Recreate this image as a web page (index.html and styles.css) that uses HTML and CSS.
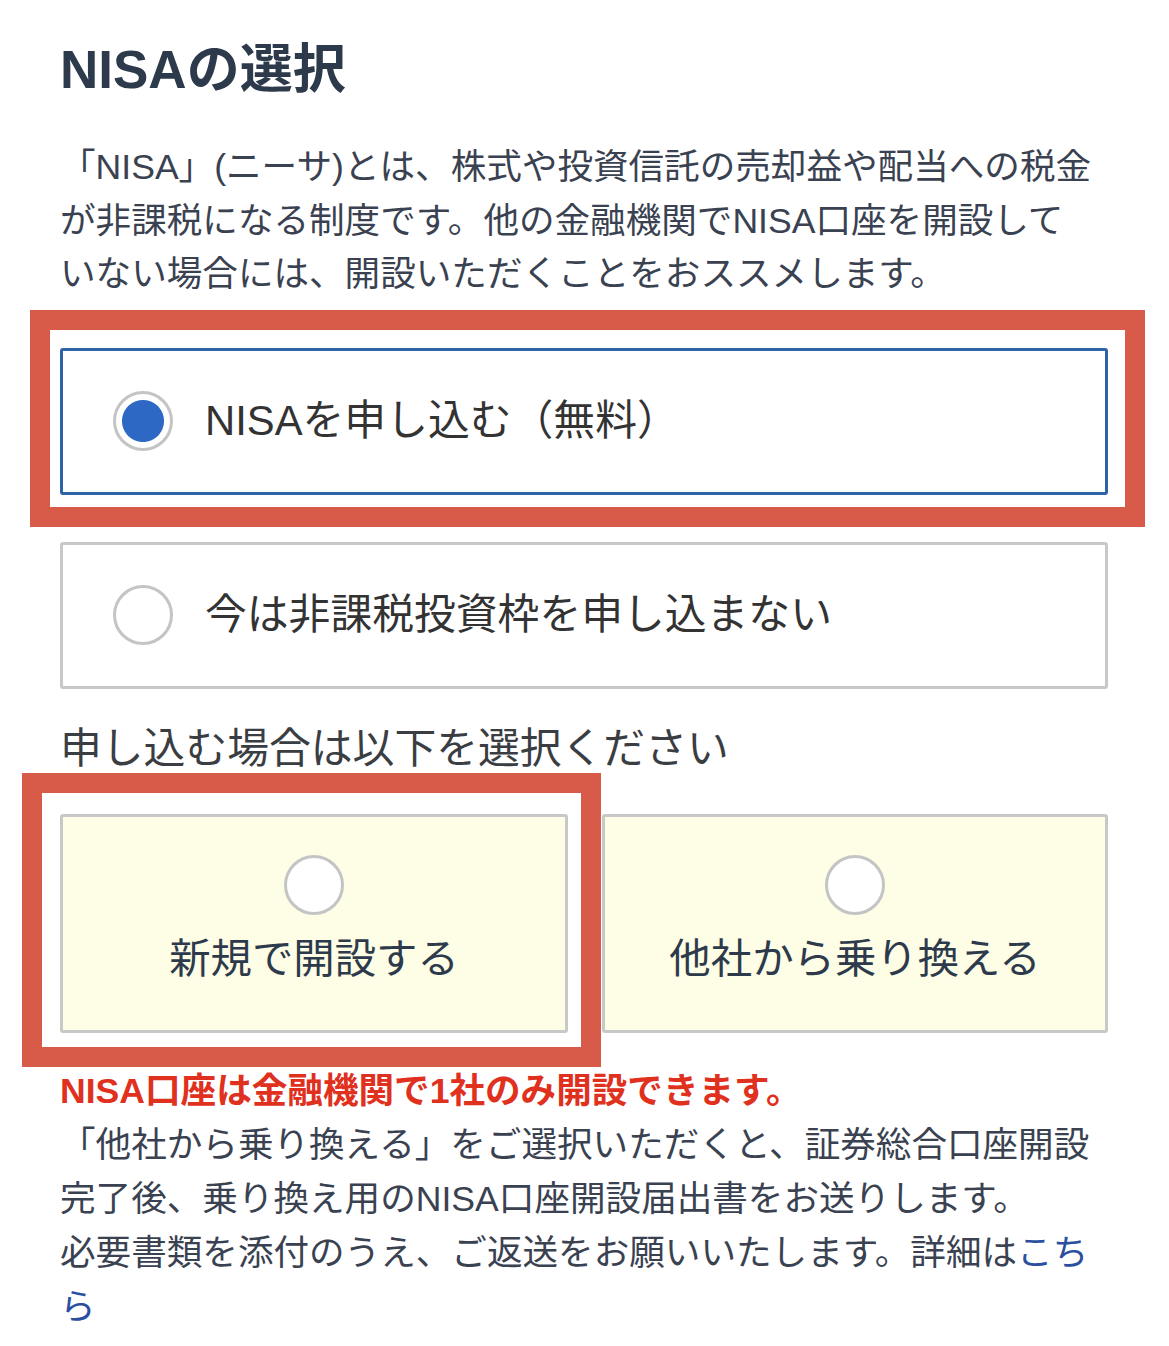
FILE: index.html
```html
<!DOCTYPE html>
<html lang="ja">
<head>
<meta charset="utf-8">
<title>NISAの選択</title>
<link rel="stylesheet" href="styles.css">
</head>
<body>
<main class="page">
  <h1 class="title">NISAの選択</h1>
  <p class="lead">「NISA」(ニーサ)とは、株式や投資信託の売却益や配当への税金が非課税になる制度です。他の金融機関でNISA口座を開設して<br>いない場合には、開設いただくことをおススメします。</p>

  <div class="options">
    <div class="option option-selected">
      <span class="radio radio-checked"></span>
      <span class="option-label">NISAを申し込む（無料）</span>
    </div>
    <div class="option">
      <span class="radio"></span>
      <span class="option-label">今は非課税投資枠を申し込まない</span>
    </div>
  </div>

  <p class="sub-heading">申し込む場合は以下を選択ください</p>

  <div class="choices">
    <div class="choice">
      <span class="radio"></span>
      <span class="choice-label">新規で開設する</span>
    </div>
    <div class="choice">
      <span class="radio"></span>
      <span class="choice-label">他社から乗り換える</span>
    </div>
  </div>

  <p class="warning">NISA口座は金融機関で1社のみ開設できます。</p>
  <p class="note">「他社から乗り換える」をご選択いただくと、証券総合口座開設完了後、乗り換え用のNISA口座開設届出書をお送りします。<br>必要書類を添付のうえ、ご返送をお願いいたします。詳細は<a class="link" href="#">こちら</a></p>

  <div class="annot annot-top"></div>
  <div class="annot annot-bottom"></div>
</main>
</body>
</html>
```
FILE: styles.css
```css
html, body {
  margin: 0;
  padding: 0;
  background: #ffffff;
}

body {
  font-family: "Liberation Sans", "Noto Sans CJK JP", sans-serif;
  color: #3a4251;
}

.page {
  position: relative;
  width: 1048px;
  padding: 40px 61px 40px 60px;
}

.title {
  margin: 0;
  font-size: 53px;
  line-height: 60px;
  font-weight: 700;
  color: #2d3a4b;
}

.lead {
  margin: 41px 0 0;
  font-size: 35.6px;
  line-height: 53.5px;
}

.options {
  display: flex;
  flex-direction: column;
  gap: 47px;
  margin-top: 46px;
}

.option {
  display: flex;
  align-items: center;
  gap: 32px;
  height: 147px;
  box-sizing: border-box;
  padding-left: 50px;
  border: 3px solid #c8c8c8;
  border-radius: 3px;
  background: #ffffff;
}

.option-selected {
  border-color: #2f63a8;
}

.radio {
  display: block;
  flex: none;
  width: 60px;
  height: 60px;
  box-sizing: border-box;
  border: 3px solid #c4c4c4;
  border-radius: 50%;
  background: #ffffff;
}

.radio-checked {
  background: radial-gradient(circle, #2d68c4 0, #2d68c4 20.5px, #ffffff 21.5px);
}

.option-label {
  font-size: 41.8px;
  line-height: 60px;
  color: #333333;
}

.sub-heading {
  margin: 30px 0 0;
  font-size: 41.8px;
  line-height: 60px;
  color: #3a3d42;
}

.choices {
  display: grid;
  grid-template-columns: 508px 506px;
  gap: 34px;
  margin-top: 35px;
}

.choice {
  display: flex;
  flex-direction: column;
  align-items: center;
  height: 219px;
  box-sizing: border-box;
  padding-top: 38px;
  border: 3px solid #c8c8c8;
  border-radius: 3px;
  background: #fefde5;
}

.choice-label {
  margin-top: 14px;
  font-size: 41.4px;
  line-height: 60px;
  color: #2d3a4b;
}

.warning {
  margin: 31px 0 0;
  font-size: 35.6px;
  line-height: 54px;
  font-weight: 700;
  color: #e0301e;
}

.note {
  margin: 0;
  font-size: 35.6px;
  line-height: 54px;
  color: #3a4251;
}

.link {
  color: #2b4fa0;
  text-decoration: none;
}

.annot {
  position: absolute;
  box-sizing: border-box;
  border: 20px solid #d85a49;
  pointer-events: none;
}

.annot-top {
  left: 30px;
  top: 310px;
  width: 1115px;
  height: 217px;
}

.annot-bottom {
  left: 22px;
  top: 773px;
  width: 579px;
  height: 294px;
}
```
